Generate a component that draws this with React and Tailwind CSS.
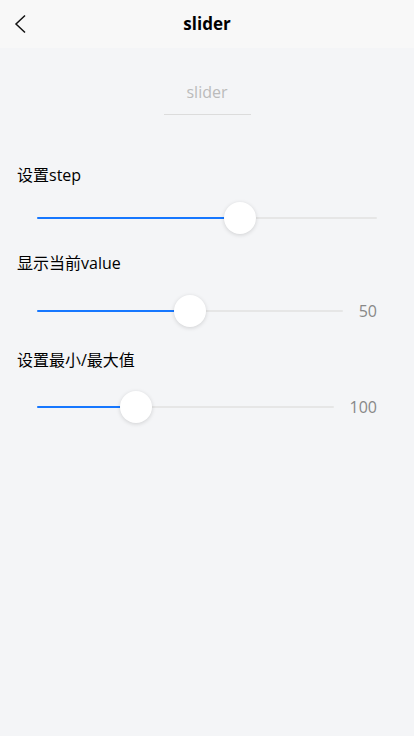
import React from "react";

const font = { fontFamily: '"Open Sans", "Noto Sans CJK SC", sans-serif' };

function Slider({ pct }) {
  return (
    <div className="relative h-8 flex items-center">
      <div className="w-full h-[2px] bg-[#e6e6e6] rounded-full" />
      <div
        className="absolute left-0 h-[2px] bg-[#1677ff] rounded-full"
        style={{ width: pct + "%" }}
      />
      <div
        className="absolute w-8 h-8 -ml-4 rounded-full bg-white shadow-[0_1px_4px_rgba(0,0,0,0.15)]"
        style={{ left: pct + "%" }}
      />
    </div>
  );
}

export default function App() {
  return (
    <div className="w-[414px] min-h-[736px] bg-[#f4f5f7] text-black" style={font}>
      <div className="relative h-12 bg-[#f8f8f8] flex items-center justify-center">
        <svg
          className="absolute left-[13px] top-[14px]"
          width="16"
          height="20"
          viewBox="0 0 16 20"
          fill="none"
          stroke="#111"
          strokeWidth="1.5"
        >
          <path d="M12 1.5 L3 10 L12 18.5" />
        </svg>
        <span className="text-[17px] font-bold leading-6">slider</span>
      </div>

      <div className="flex justify-center pt-[22px]">
        <div className="w-[87px] h-[45px] border-b border-[#dcdcdc] flex items-center justify-center text-[16px] text-[#bbbbbb]">
          slider
        </div>
      </div>

      <div className="pl-[17px] pr-[37px]">
        <div className="mt-[48px] text-[16px] leading-6">设置step</div>
        <div className="mt-[15px] pl-[20px]">
          <Slider pct={59.7} />
        </div>

        <div className="mt-[17px] text-[16px] leading-6">显示当前value</div>
        <div className="mt-[20px] pl-[20px] flex items-center">
          <div className="flex-1">
            <Slider pct={50} />
          </div>
          <span className="ml-4 text-[16px] text-[#888] leading-6">50</span>
        </div>

        <div className="mt-[21px] text-[16px] leading-6">设置最小/最大值</div>
        <div className="mt-[19px] pl-[20px] flex items-center">
          <div className="flex-1">
            <Slider pct={33.3} />
          </div>
          <span className="ml-[16px] text-[16px] text-[#888] leading-6">100</span>
        </div>
      </div>
    </div>
  );
}
